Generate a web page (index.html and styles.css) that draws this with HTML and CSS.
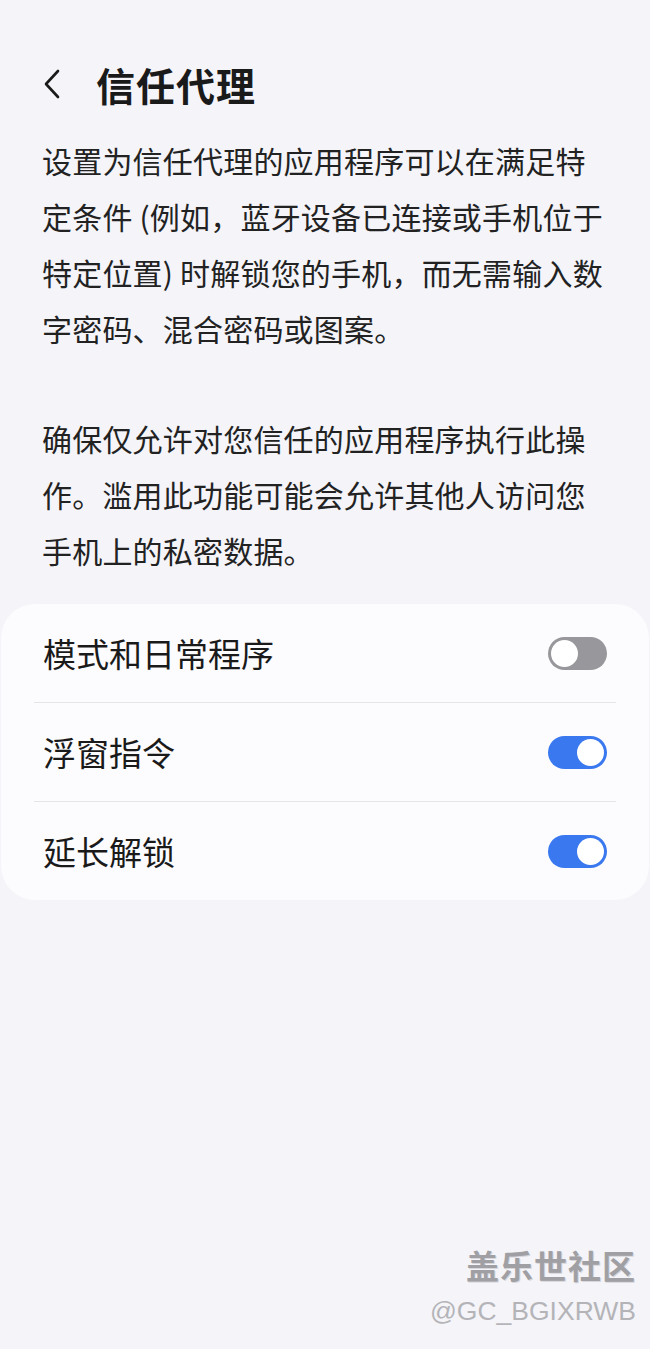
FILE: index.html
```html
<!DOCTYPE html>
<html lang="zh-CN">
<head>
    <meta charset="UTF-8">
    <meta name="viewport" content="width=device-width, initial-scale=1.0">
    <title>信任代理</title>
    <link rel="stylesheet" href="styles.css">
</head>
<body>
    <div class="page">
        <div class="header">
            <span class="back">
                <svg width="20" height="32" viewBox="0 0 20 32">
                    <path d="M16 3 L4 16 L16 29" fill="none" stroke="#1a1a1a" stroke-width="2.6" stroke-linecap="round" stroke-linejoin="round"/>
                </svg>
            </span>
            <h1>信任代理</h1>
        </div>

        <div class="desc">
            <p>设置为信任代理的应用程序可以在满足特定条件 (例如，蓝牙设备已连接或手机位于特定位置) 时解锁您的手机，而无需输入数字密码、混合密码或图案。</p>
            <p>确保仅允许对您信任的应用程序执行此操作。滥用此功能可能会允许其他人访问您手机上的私密数据。</p>
        </div>

        <div class="card">
            <div class="row">
                <span>模式和日常程序</span>
                <span class="switch"></span>
            </div>
            <div class="divider"></div>
            <div class="row">
                <span>浮窗指令</span>
                <span class="switch on"></span>
            </div>
            <div class="divider"></div>
            <div class="row">
                <span>延长解锁</span>
                <span class="switch on"></span>
            </div>
        </div>

        <div class="watermark">
            <div class="wm-title">盖乐世社区</div>
            <div class="wm-user">@GC_BGIXRWB</div>
        </div>
    </div>
</body>
</html>
```

FILE: styles.css
```css
html, body {
    margin: 0;
    padding: 0;
}
body {
    background-color: #f4f4f9;
    font-family: "Noto Sans CJK SC", "Noto Sans", sans-serif;
    color: #1a1a1a;
}
.page {
    position: relative;
    width: 650px;
    height: 1349px;
    overflow: hidden;
}
.header {
    display: flex;
    align-items: center;
    height: 48px;
    margin-top: 60px;
    padding-left: 42px;
}
.back {
    display: flex;
    width: 54px;
}
h1 {
    margin: 0;
    font-size: 39px;
    font-weight: 700;
    letter-spacing: 1px;
}
.desc {
    padding: 0 42px;
    margin-top: 24px;
}
.desc p {
    margin: 0 0 54px 0;
    font-size: 30px;
    letter-spacing: 0.2px;
    line-height: 56px;
    color: #222;
}
.desc p:last-child {
    margin-bottom: 0;
}
.card {
    margin: 26px 1px 0 1px;
    background: #fcfcfe;
    border-radius: 34px;
}
.row {
    display: flex;
    align-items: center;
    justify-content: space-between;
    height: 98px;
    padding: 0 42px;
    font-size: 33px;
    color: #1a1a1a;
}
.divider {
    height: 1px;
    margin: 0 33px;
    background: #e4e4e9;
}
.switch {
    position: relative;
    width: 59px;
    height: 33px;
    border-radius: 17px;
    background: #98989c;
    flex-shrink: 0;
}
.switch::after {
    content: "";
    position: absolute;
    top: 3px;
    left: 3px;
    width: 27px;
    height: 27px;
    border-radius: 50%;
    background: #fff;
}
.switch.on {
    background: #3a78ef;
}
.switch.on::after {
    left: 29px;
}
.watermark {
    position: absolute;
    right: 14px;
    top: 1242px;
    text-align: right;
}
.wm-title {
    font-size: 33px;
    font-weight: 700;
    color: #a0a0a4;
    letter-spacing: 1px;
    text-shadow: 1px 1px 0 #d8d8dc;
    line-height: 46px;
}
.wm-user {
    font-family: "Liberation Sans", Arial, sans-serif;
    font-size: 26.5px;
    color: #b4b4b8;
    line-height: 44px;
    margin-top: 1px;
}
```
